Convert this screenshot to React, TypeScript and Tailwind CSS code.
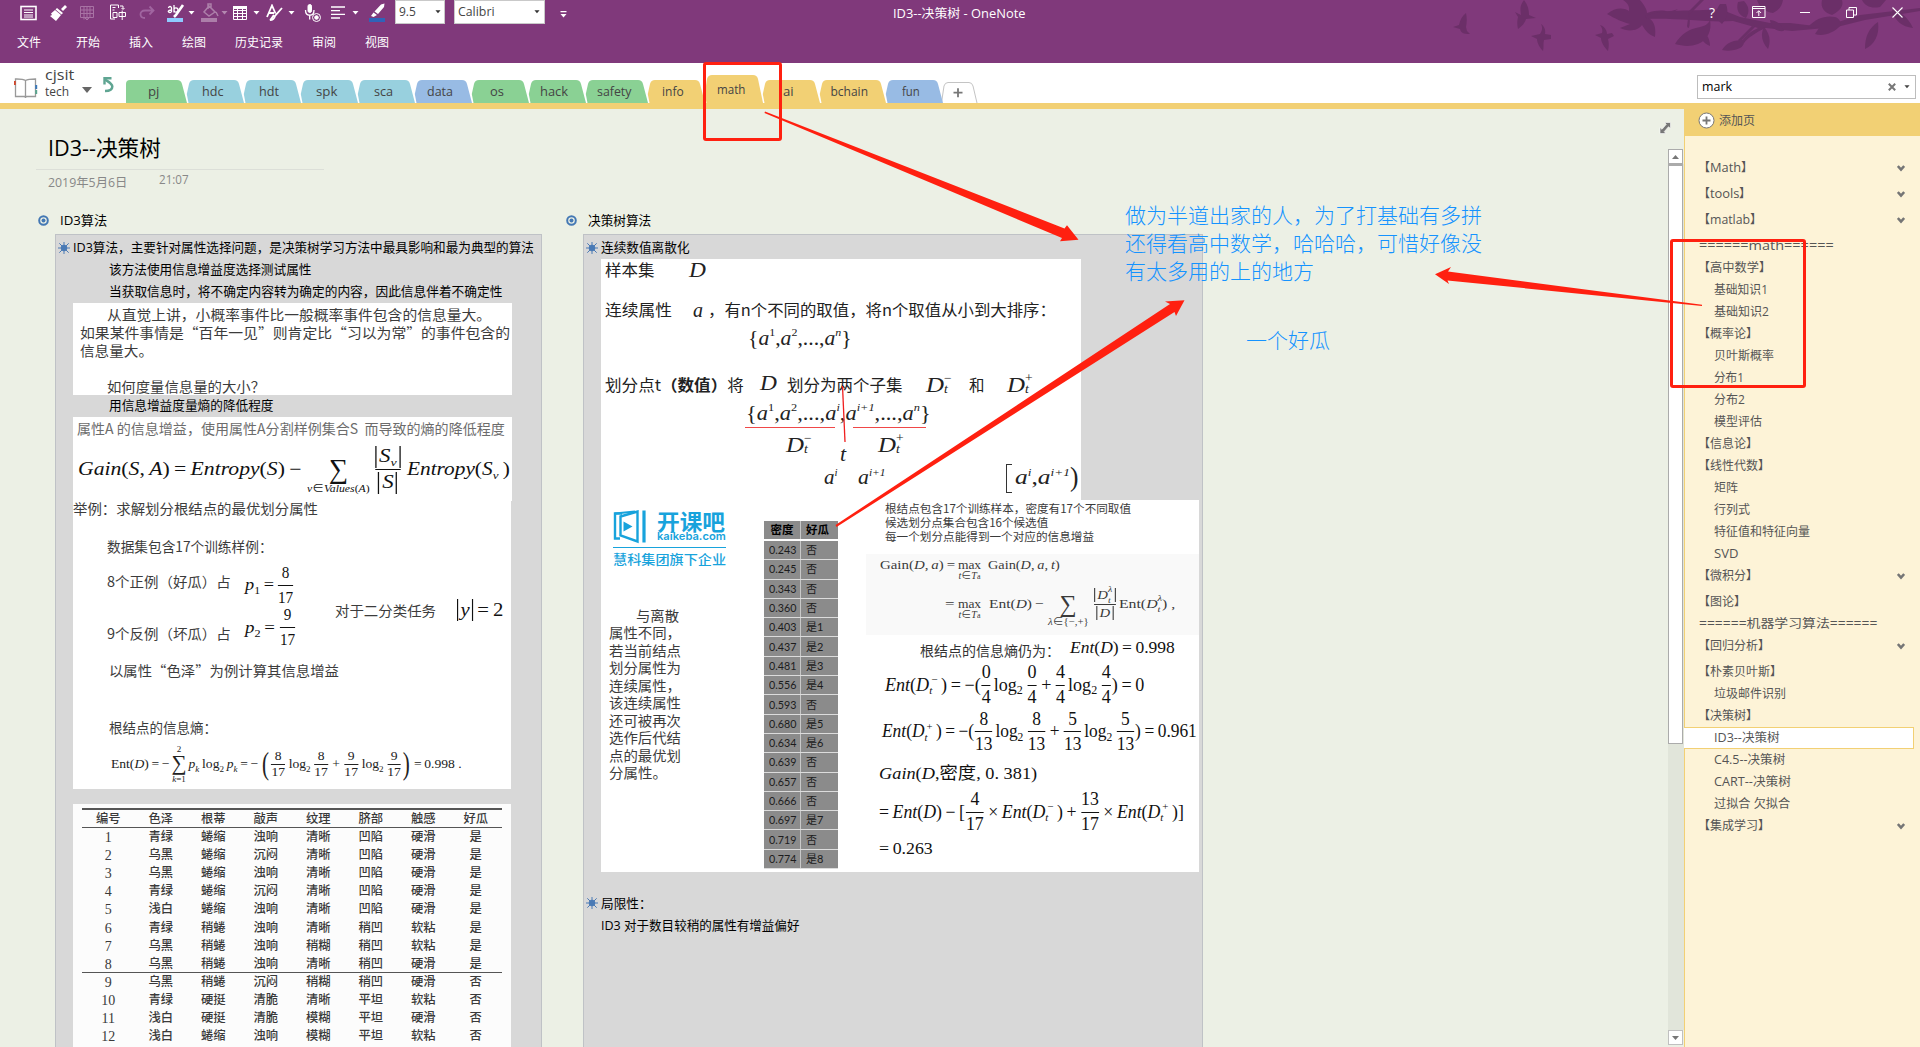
import React, { useLayoutEffect, useRef, useState } from "react";

const UI = "font-['Open_Sans','Noto_Sans_CJK_SC',sans-serif]";
const CJK = "font-['Noto_Sans_CJK_SC',sans-serif]";
const MATH = "font-['Liberation_Serif','Noto_Sans_CJK_SC',serif]";

type Kids = { children?: React.ReactNode };

/** Stretches its content horizontally so that it fills exactly `w` pixels. */
function Fit({ w, className = "", children }: Kids & { w: number; className?: string }) {
  const ref = useRef<HTMLSpanElement>(null);
  const [k, setK] = useState(1);
  useLayoutEffect(() => {
    if (ref.current && ref.current.offsetWidth) setK(w / ref.current.offsetWidth);
  }, [w]);
  return (
    <span className={"flex shrink-0 items-center " + className} style={{ width: w }}>
      <span ref={ref} className="inline-flex w-max shrink-0 origin-left items-center whitespace-pre" style={{ transform: `scaleX(${k})` }}>
        {children}
      </span>
    </span>
  );
}

function Frac({ n, d, h = "h-[24px]" }: { n: React.ReactNode; d: React.ReactNode; h?: string }) {
  return (
    <span className="inline-flex shrink-0 flex-col items-center px-[1px] not-italic">
      <span className={"flex items-center " + h}>{n}</span>
      <span className="h-px w-full bg-current" />
      <span className={"flex items-center " + h}>{d}</span>
    </span>
  );
}

/** Stacked superscript and subscript. */
function Sc({ up, dn, size = "text-[11px]" }: { up?: React.ReactNode; dn?: React.ReactNode; size?: string }) {
  return (
    <span className={"inline-flex flex-col leading-[10px] " + size}>
      <span className="h-[11px]">{up}</span>
      <span className="h-[11px]">{dn}</span>
    </span>
  );
}

const I = ({ children }: Kids) => <span className="italic">{children}</span>;
const Abs = ({ children, h = "h-[22px]" }: Kids & { h?: string }) => (
  <span className={"inline-flex items-center border-x border-current px-[2px] " + h}>{children}</span>
);

/* ---------- title bar ---------- */

const Caret = ({ className = "" }: { className?: string }) => (
  <svg width="7" height="4" viewBox="0 0 7 4" className={className}>
    <path d="M0.5 0h6L3.5 3.6z" fill="currentColor" />
  </svg>
);

function Decoration() {
  return (
    <svg className="absolute top-0 right-0" width="480" height="62" viewBox="1440 0 480 62" fill="#6b2f68">
      <path d="M1466 13c-4 3-6 7-7 12l-6 2 7 2c1 4 3 5 10 5l-3-3-1-4c1-5 1-9 0-14z" />
      <path d="M1524 0c-4 5-4 9-3 15l-6-3 3 5c-1 4-1 8 0 12 4-3 7-6 8-10l10-1-7-3c0-5-1-10-5-15z" />
      <path d="M1541 24c2 4 1 7-1 10l-9 2 6 3c0 4 3 9 6 12 1-4 0-7 1-11l7-1v-4l-6-1c1-4-1-8-4-10z" />
      <path d="M1600 25c2 3 3 5 2 8l-7 2 6 3c0 4 3 9 7 13 1-5 1-8 0-12l6-3-2-3-5 1c0-4-3-8-7-9z" />
      <path d="M1607 14c8-6 15-7 22-3 1-6-3-9-6-11h17c4 5 7 9 7 13 10-3 16-3 22-1l9-3-9 6c-8-1-13 0-20 3 6 4 7 11 6 19-6-2-10-7-13-12-4 6-14 7-22 3l10-4c-8-2-14-5-23-10z" />
      <path d="M1645 16c20-8 45-4 75-7l20 8 30 6h20l25 3 20-3 25-8 60-7v3l-55 9-28 7-45 4-26-3c-10 4-18 10-22 15l-2-2c5-7 10-10 16-13l-25-7c-25 2-50-3-86-2z" />
      <path d="M1700 0l-12 12 2 2 14-14zM1689 12c2 12 0 20-2 14z" />
      <path d="M1675 44c6-10 14-15 25-17 5-1 8-3 10-7 2 10-2 20-12 24-8 3-16 2-23 0zM1698 28c8 4 12 10 12 18-7-3-12-9-12-18z" />
      <path d="M1722 50c5-8 12-10 22-10 1 6-4 9-10 10-4 1-8 1-12 0zM1738 40l14-14 3 1-15 15z" />
      <path d="M1764 27c6 7 7 14 4 22-6-7-8-14-4-22zM1770 20c8 1 12 5 14 11-9 1-13-4-14-11zM1757 0c2 7 8 12 16 13 6-3 9-7 10-13z" />
      <path d="M1720 4c-6 8-5 14 2 20 5-6 7-12 4-20zM1738 2c-2 7 0 13 8 16 4-6 3-12-2-17z" />
      <path d="M1808 27c8-9 18-12 27-10 4 1 6 5 6 8-7 8-18 12-26 9l4-6zM1822 0c-2 8 3 13 10 15 8-4 12-9 10-15z" />
      <path d="M1878 22c-9 6-13 14-13 27 9-4 15-14 13-27zM1862 0c3 6 9 9 18 7l6-7zM1892 10c8 1 16 7 21 18-11-1-19-8-21-18z" />
    </svg>
  );
}

function TitleBar() {
  return (
    <header className={"relative h-[63px] shrink-0 bg-[#80397b] text-white " + UI}>
      <Decoration />
      <div className="relative flex h-[25px] items-start">
        <div className="flex h-[25px] w-[395px] shrink-0 items-center">
          <svg className="ml-[20px]" width="18" height="16" viewBox="0 0 18 16" fill="none" stroke="#fff">
            <rect x="1" y="1.5" width="15" height="13" strokeWidth="1.6" />
            <path d="M4 5h9M4 7.5h9M4 10h9M4 12h9" />
          </svg>
          <svg className="ml-[11px]" width="18" height="16" viewBox="0 0 18 16" fill="#fff">
            <path d="M12 4l4-4 2 2-4 4zM8 3l6 5-1.5 1.5L6.500 4.500zM6 5l6 5-5 6-6-5 2-1-1-1.500z" />
          </svg>
          <svg className="ml-[12px]" width="16" height="16" viewBox="0 0 16 16" fill="none" stroke="#a873a4">
            <path d="M1.500 1.500h13v11h-13zM1.500 5h13M1.500 8.500h13M5 1.500v13M8 1.500v7M11 1.500v11M8 8v7M5.500 12.500L8 15l2.500-2.500" />
          </svg>
          <svg className="ml-[14px]" width="18" height="17" viewBox="0 0 18 17" fill="none" stroke="#fff">
            <path d="M6 15H1.500V1h8v3M3.500 3.500h3M3.500 6h2M11 2h3v3M12.500 4l1.500 1.500L15.500 4M4 8.500h4v5H4zM10 8.500h6.500v4H10zM13.200 6.500v9.500" />
          </svg>
          <svg className="ml-[12px]" width="16" height="16" viewBox="0 0 16 16" fill="none" stroke="#a065a0" strokeWidth="1.800">
            <path d="M14 5.500H6C0 5.500 0 13 6 13M10.500 1.500l4 4-4 4" />
          </svg>
          <span className="ml-[12px] flex w-[18px] flex-col">
            <svg width="18" height="15" viewBox="0 0 18 15" fill="none" stroke="#fff">
              <path d="M1.500 5c0-2 3-2 3 0v4M4.500 7c-4 0-4 2.500-1.500 2.500L4.500 9M7 2v7.500M7 7c0-3 4-2.500 4 0s-4 3-4 0" strokeWidth="1.300" />
              <path d="M16 2L9 12l-2 2" strokeWidth="2.600" />
            </svg>
            <span className="h-[4px] w-[16px] bg-[#8ecbff]" />
          </span>
          <Caret className="ml-[3px]" />
          <span className="ml-[6px] flex w-[18px] flex-col opacity-35">
            <svg width="18" height="15" viewBox="0 0 18 15" fill="none" stroke="#fff" strokeWidth="1.500">
              <path d="M8 3l6 6-6 4-5-4zM7 6V1h3v4M15 9l2 4" />
            </svg>
            <span className="h-[4px] w-[16px] bg-white" />
          </span>
          <Caret className="ml-[2px] opacity-40" />
          <svg className="ml-[5px]" width="14" height="14" viewBox="0 0 14 14" fill="none" stroke="#fff">
            <path d="M0.500 1.500h13v12h-13zM0.500 4.500h13M0.500 7.500h13M0.500 10.500h13M4.500 1.500v12M9.500 1.500v12" />
            <path d="M0 1.500h14" strokeWidth="3" />
          </svg>
          <Caret className="ml-[6px]" />
          <svg className="ml-[6px]" width="17" height="18" viewBox="0 0 17 18" fill="none" stroke="#fff" strokeWidth="1.800">
            <path d="M1 13L6 1.500l3.500 8M3 9h5M16 4L9 12c-1 4-3 4-5 4 2-1 2-3 4-5" />
          </svg>
          <Caret className="ml-[5px]" />
          <svg className="ml-[9px]" width="18" height="18" viewBox="0 0 18 18" fill="none" stroke="#fff">
            <rect x="4" y="0.500" width="3.500" height="8" rx="1.700" fill="#fff" />
            <path d="M1.500 6c0 7 8.500 7 8.500 0M5.700 11.500v4" strokeWidth="1.300" />
            <circle cx="12.500" cy="13.500" r="4" />
            <circle cx="12.500" cy="13.500" r="1.800" fill="#fff" />
          </svg>
          <svg className="ml-[9px]" width="15" height="13" viewBox="0 0 15 13" stroke="#fff" strokeWidth="1.300">
            <path d="M0 1h14M0 4.700h9M0 8.400h14M0 12h9" />
          </svg>
          <Caret className="ml-[6px]" />
          <span className="ml-[10px] flex flex-col items-center">
            <svg width="16" height="15" viewBox="0 0 16 15" fill="#fff">
              <path d="M12 1.500l3.500-1L15 4 9 11 5.500 8.500zM4.500 9.500l3.500 2.500-3.500 2L2 13z" />
            </svg>
            <span className="h-[4px] w-[16px] bg-[#2f63b8]" />
          </span>
        </div>
        <div className="flex h-[24px] w-[50px] items-center justify-between border border-[#c9c9c9] bg-white pr-[3px] pl-[3px] text-[12px] text-[#444]">
          <Fit w={17}>9.5</Fit>
          <Caret className="w-[6px] text-[#333]" />
        </div>
        <div className="ml-[9px] flex h-[24px] w-[91px] items-center justify-between border border-[#c9c9c9] bg-white pr-[4px] pl-[3px] text-[12px] text-[#444]">
          <Fit w={37}>Calibri</Fit>
          <Caret className="w-[6px] text-[#333]" />
        </div>
        <svg className="mt-[11px] ml-[15px]" width="7" height="7" viewBox="0 0 7 7" fill="#fff">
          <path d="M0.500 0h6v1.200h-6zM0.500 3h6L3.500 6.500z" />
        </svg>
        <Fit w={132} className="mt-[5px] ml-[326px] text-[12px]">ID3--决策树 - OneNote</Fit>
        <div className="ml-auto flex h-[24px] w-[211px] items-center">
          <span className="w-[10px] text-[14px]">?</span>
          <svg className="ml-[33px]" width="14" height="12" viewBox="0 0 14 12" fill="none" stroke="#fff">
            <path d="M0.500 0.500h12.500v11H0.500zM0.500 2.500h12.500M6.800 10V5M4.500 7L6.800 4.700 9.100 7" />
          </svg>
          <span className="ml-[34px] h-px w-[10px] bg-white" />
          <svg className="ml-[36px]" width="11" height="11" viewBox="0 0 11 11" fill="none" stroke="#fff">
            <path d="M0.500 3h7v7.500h-7zM3 3V0.500h7.500v7.500H8" />
          </svg>
          <svg className="ml-[35px]" width="11" height="11" viewBox="0 0 11 11" stroke="#fff" strokeWidth="1.100">
            <path d="M0.500 0.500l10 10M10.500 0.500l-10 10" />
          </svg>
        </div>
      </div>
      <nav className="relative flex h-[36px] items-center pl-[17px] text-[12px]">
        <span className="w-[59px]">文件</span>
        <span className="w-[53px]">开始</span>
        <span className="w-[53px]">插入</span>
        <span className="w-[53px]">绘图</span>
        <span className="w-[77px]">历史记录</span>
        <span className="w-[53px]">审阅</span>
        <span>视图</span>
      </nav>
    </header>
  );
}

/* ---------- section tabs ---------- */

type Tab = { name: string; w: number; c: string; tw: number; on?: boolean };
const TABS: Tab[] = [
  { name: "pj", w: 60, c: "#8ad194", tw: 11 },
  { name: "hdc", w: 57, c: "#98d0de", tw: 21 },
  { name: "hdt", w: 57, c: "#98d0de", tw: 20 },
  { name: "spk", w: 57, c: "#98d0de", tw: 21 },
  { name: "sca", w: 57, c: "#98d0de", tw: 19 },
  { name: "data", w: 57, c: "#98bbe4", tw: 26 },
  { name: "os", w: 57, c: "#8ad194", tw: 14 },
  { name: "hack", w: 57, c: "#8ad194", tw: 28 },
  { name: "safety", w: 62, c: "#8ad194", tw: 34 },
  { name: "info", w: 57, c: "#f2d074", tw: 22 },
  { name: "math", w: 58, c: "#f2d074", tw: 28, on: true },
  { name: "ai", w: 57, c: "#f2d074", tw: 11 },
  { name: "bchain", w: 66, c: "#f2d074", tw: 38 },
  { name: "fun", w: 57, c: "#98bbe4", tw: 18 },
];

function SectionTab({ t, first }: { t: Tab; first: boolean }) {
  const h = t.on ? 28 : 23;
  const w = t.w;
  const left = first ? `M0 ${h}V4Q0 0 4 0` : `M2.500 ${h}L0.800 ${h - 9}L3 4Q4 0 8 0`;
  return (
    <div className={"relative flex items-center justify-center pr-[5px] text-[#444] " + (t.on ? "h-[28px]" : "h-[23px]")} style={{ width: w }}>
      <svg className="absolute top-0 left-0 overflow-visible" width={w} height={h}>
        <path d={`${left}H${w - 9}Q${w - 5} 0 ${w - 4} 4L${w + 1} ${h}Z`} fill={t.c} />
      </svg>
      <Fit w={t.tw} className="relative pt-[1px] text-[12px]">{t.name}</Fit>
    </div>
  );
}

function TabStrip() {
  return (
    <div className={"flex h-[40px] shrink-0 items-end bg-white " + UI}>
      <div className="flex h-[40px] w-[126px] items-start">
        <svg className="mt-[15px] ml-[14px]" width="24" height="20" viewBox="0 0 24 20" fill="none">
          <path d="M11.500 2.500C9 0.800 5 1 1.500 1v17.500h9l1 1 1-1h9V1c-4 0-7.500 0-10 1.500zV19" stroke="#999" strokeWidth="1.300" />
          <path d="M0.800 3v4" stroke="#d2472c" strokeWidth="2" />
          <path d="M22.200 7v4" stroke="#3b78b8" strokeWidth="2" />
          <path d="M22.200 12v4" stroke="#5aa58e" strokeWidth="2" />
        </svg>
        <div className="ml-[7px] w-[30px] pt-px text-[#444]">
          <Fit w={29} className="h-[21px] text-[15px]">cjsit</Fit>
          <Fit w={24} className="h-[15px] text-[12.500px]">tech</Fit>
        </div>
        <svg className="mt-[24px] ml-[7px]" width="10" height="6" viewBox="0 0 10 6"><path d="M0 0h10L5 6z" fill="#666" /></svg>
        <svg className="mt-[14px] ml-[11px]" width="11" height="16" viewBox="0 0 11 16" fill="none" stroke="#5fa592">
          <path d="M2 2.500c3 2 7.300 4 7.300 7C9.300 12.500 7 14 2 14" strokeWidth="2.500" />
          <path d="M1.500 7.500V1.200h7" strokeWidth="2.400" />
        </svg>
      </div>
      {TABS.map((t, i) => <SectionTab key={t.name} t={t} first={i === 0} />)}
      <svg className="-ml-[1px] overflow-visible" width="36" height="21" viewBox="0 0 36 21" fill="none">
        <path d="M0.500 21L1.500 14 3 4Q4 0.500 7 0.500H28Q31 0.500 32 4L36 21" stroke="#c4c4c4" />
        <path d="M12.500 10.700h9M17 6.200v9" stroke="#777" strokeWidth="1.800" />
      </svg>
      <div className="mr-[4px] mb-[4px] ml-auto flex h-[24px] w-[219px] items-center border border-[#bdbdbd] bg-white pl-[4px] text-[12px] text-black">
        <Fit w={30} className="pb-[1px]">mark</Fit>
        <svg className="ml-[156px]" width="8" height="8" viewBox="0 0 8 8"><path d="M0.800 0.800l6.400 6.400M7.200 0.800L0.800 7.200" stroke="#777" strokeWidth="2" /></svg>
        <Caret className="ml-[8px] w-[6px] text-[#444]" />
      </div>
    </div>
  );
}

/* ---------- notes canvas ---------- */

const Target = () => (
  <svg width="11" height="11" viewBox="0 0 11 11" fill="none">
    <circle cx="5.500" cy="5.500" r="4.300" stroke="#4478b4" strokeWidth="2" />
    <circle cx="5.500" cy="5.500" r="2" fill="#4478b4" />
  </svg>
);
const Star = () => (
  <svg className="shrink-0" width="12" height="12" viewBox="0 0 12 12">
    <path d="M6 0v12M0 6h12M1.300 1.300l9.400 9.400M10.700 1.300l-9.400 9.400" stroke="#4a7ab5" strokeWidth="1" />
    <circle cx="6" cy="6" r="3.200" fill="#4a7ab5" />
  </svg>
);

const MELONS: string[][] = [
  ["1", "青绿", "蜷缩", "浊响", "清晰", "凹陷", "硬滑", "是"],
  ["2", "乌黑", "蜷缩", "沉闷", "清晰", "凹陷", "硬滑", "是"],
  ["3", "乌黑", "蜷缩", "浊响", "清晰", "凹陷", "硬滑", "是"],
  ["4", "青绿", "蜷缩", "沉闷", "清晰", "凹陷", "硬滑", "是"],
  ["5", "浅白", "蜷缩", "浊响", "清晰", "凹陷", "硬滑", "是"],
  ["6", "青绿", "稍蜷", "浊响", "清晰", "稍凹", "软粘", "是"],
  ["7", "乌黑", "稍蜷", "浊响", "稍糊", "稍凹", "软粘", "是"],
  ["8", "乌黑", "稍蜷", "浊响", "清晰", "稍凹", "硬滑", "是"],
  ["9", "乌黑", "稍蜷", "沉闷", "稍糊", "稍凹", "硬滑", "否"],
  ["10", "青绿", "硬挺", "清脆", "清晰", "平坦", "软粘", "否"],
  ["11", "浅白", "硬挺", "清脆", "模糊", "平坦", "硬滑", "否"],
  ["12", "浅白", "蜷缩", "浊响", "模糊", "平坦", "软粘", "否"],
];

function MelonTable() {
  return (
    <div className={"mt-[15px] ml-[17px] h-[260px] w-[438px] bg-[#fcfcfc] px-[9px] pt-[4px] text-[12.300px] font-medium text-[#3a3a3a] " + MATH}>
      <div className="grid h-[20px] grid-cols-8 items-center border-t-2 border-b border-[#555] text-center leading-[18px]">
        {["编号", "色泽", "根蒂", "敲声", "纹理", "脐部", "触感", "好瓜"].map((h) => <span key={h}>{h}</span>)}
      </div>
      {MELONS.map((r, i) => (
        <div key={i} className={"grid h-[18.100px] grid-cols-8 items-center pt-px text-center leading-[17px] " + (i === 7 ? "border-b border-[#555]" : "")}>
          {r.map((c, j) => <span key={j} className={j === 0 ? "text-[14px]" : ""}>{c}</span>)}
        </div>
      ))}
    </div>
  );
}

const Log = () => (
  <span className="flex items-center pl-[2px]">log<Sc dn="2" size="text-[12px]" />&thinsp;</span>
);
const EntD = ({ s }: { s: string }) => (
  <span className="flex items-center"><I>Ent</I>(<I>D</I><Sc up={<span className="pl-[2px]">{s}</span>} dn={<I>t</I>} />&thinsp;)</span>
);

function LeftNote() {
  return (
    <section className="w-[529px] shrink-0">
      <h2 className="flex h-[28px] items-center pl-[2px] text-[12.670px] text-black">
        <Target />
        <Fit w={47} className="ml-[11px]">ID3算法</Fit>
      </h2>
      <div className="ml-[19px] h-[830px] w-[487px] border border-[#bfc2c6] bg-[#d8d8d8] pt-[2px] text-[12.670px] text-black">
        <div className="flex h-[21px] items-center pl-[2px]">
          <Star />
          <Fit w={461} className="ml-[3px]">ID3算法，主要针对属性选择问题，是决策树学习方法中最具影响和最为典型的算法</Fit>
        </div>
        <div className="flex h-[22px] items-center pl-[53px]"><Fit w={203}>该方法使用信息增益度选择测试属性</Fit></div>
        <div className="flex h-[23px] items-center pl-[53px]"><Fit w={393}>当获取信息时，将不确定内容转为确定的内容，因此信息伴着不确定性</Fit></div>

        <div className={"ml-[17px] h-[92px] w-[439px] bg-white pt-[2px] text-[14px] leading-[18px] text-[#3c3c3c] " + CJK}>
          <Fit w={384} className="ml-[34px] h-[18px]">从直觉上讲，小概率事件比一般概率事件包含的信息量大。</Fit>
          <Fit w={430} className="ml-[7px] h-[18px]">如果某件事情是“百年一见”则肯定比“习以为常”的事件包含的</Fit>
          <Fit w={73} className="ml-[7px] h-[18px]">信息量大。</Fit>
          <Fit w={158} className="mt-[18px] ml-[34px] h-[17px]">如何度量信息量的大小？</Fit>
        </div>
        <div className="flex h-[22px] items-center pb-[2px] pl-[53px]"><Fit w={165}>用信息增益度量熵的降低程度</Fit></div>

        <div className="ml-[17px] h-[84px] w-[439px] bg-white">
          <Fit w={428} className={"ml-[4px] h-[23px] text-[14px] text-[#6c6c6c] " + CJK}>属性A 的信息增益，使用属性A分割样例集合S  而导致的熵的降低程度</Fit>
          <div className={"flex h-[60px] items-center pb-[1px] pl-[5px] text-[18px] text-[#111] " + MATH}>
            <Fit w={224}><I>Gain</I>(<I>S</I>,&thinsp;<I>A</I>)&thinsp;=&thinsp;<I>Entropy</I>(<I>S</I>)&thinsp;−</Fit>
            <span className="ml-[5px] flex w-[63px] flex-col items-center">
              <span className="h-[12px]" />
              <span className="flex h-[26px] items-center text-[27px]">∑</span>
              <Fit w={63} className="h-[12px] text-[11px]"><I>v</I>∈<I>Values</I>(<I>A</I>)</Fit>
            </span>
            <Fit w={28} className="ml-[4px]">
              <Frac h="h-[25px]" n={<Abs><I>S</I><Sc dn={<I>v</I>} size="text-[11px]" /></Abs>} d={<Abs><I>S</I></Abs>} />
            </Fit>
            <Fit w={103} className="ml-[5px]"><I>Entropy</I>(<I>S</I><Sc dn={<I>v</I>} size="text-[11px]" />&thinsp;)</Fit>
          </div>
        </div>

        <div className={"ml-[17px] h-[288px] w-[438px] bg-white text-[14px] text-[#3c3c3c] " + CJK}>
          <Fit w={245} className="h-[14px]">举例：求解划分根结点的最优划分属性</Fit>
          <Fit w={166} className="mt-[22px] ml-[34px] h-[19px]">数据集包含17个训练样例：</Fit>
          <div className="mt-[3px] flex h-[86px]">
            <div className="w-[262px]">
              <div className="flex h-[52px] items-center pl-[34px]">
                <Fit w={124} className="mb-[7px]">8个正例（好瓜）占</Fit>
                <span className={"ml-[14px] flex items-center text-[17px] text-[#111] " + MATH}>
                  <Fit w={29}><I>p</I><Sc dn="1" />&thinsp;=</Fit>
                  <Fit w={17} className="ml-[3px]"><Frac n="8" d="17" /></Fit>
                </span>
              </div>
              <div className="flex h-[33px] items-center pl-[34px]">
                <Fit w={124} className="mt-[12px]">9个反例（坏瓜）占</Fit>
                <span className={"ml-[14px] flex items-center text-[17px] text-[#111] " + MATH}>
                  <Fit w={30}><I>p</I><Sc dn="2" />&thinsp;=</Fit>
                  <Fit w={17} className="ml-[4px]"><Frac n="9" d="17" /></Fit>
                </span>
              </div>
            </div>
            <div className="flex items-center pt-[16px]">
              <Fit w={101}>对于二分类任务</Fit>
              <Fit w={46} className={"ml-[21px] text-[18px] text-[#111] " + MATH}><Abs><I>y</I></Abs>&thinsp;=&thinsp;2</Fit>
            </div>
          </div>
          <Fit w={230} className="mt-[16px] ml-[36px] h-[19px]">以属性“色泽”为例计算其信息增益</Fit>
          <Fit w={108} className="mt-[38px] ml-[36px] h-[18px]">根结点的信息熵：</Fit>
          <Fit w={351} className={"mt-[3px] ml-[38px] h-[50px] text-[13.500px] text-[#222] " + MATH}>
            Ent(<I>D</I>)&thinsp;=&thinsp;−
            <span className="flex flex-col items-center px-[2px] text-[9px]">
              <span className="h-[10px] leading-[10px]">2</span>
              <span className="flex h-[20px] items-center text-[21px]">∑</span>
              <span className="h-[10px] leading-[10px]"><I>k</I>=1</span>
            </span>
            <I>p</I><Sc dn={<I>k</I>} size="text-[9px]" />&thinsp;log<Sc dn="2" size="text-[9px]" />&thinsp;<I>p</I><Sc dn={<I>k</I>} size="text-[9px]" />&thinsp;=&thinsp;−&thinsp;
            <span className="scale-x-75 scale-y-[1.150] text-[28px] leading-none">(</span>
            <Frac h="h-[15px]" n="8" d="17" />&thinsp;log<Sc dn="2" size="text-[9px]" />&thinsp;<Frac h="h-[15px]" n="8" d="17" /> + <Frac h="h-[15px]" n="9" d="17" />&thinsp;log<Sc dn="2" size="text-[9px]" />&thinsp;<Frac h="h-[15px]" n="9" d="17" />
            <span className="scale-x-75 scale-y-[1.150] text-[28px] leading-none">)</span>&thinsp;=&thinsp;0.998 .
          </Fit>
        </div>
        <MelonTable />
      </div>
    </section>
  );
}

const DENSITY: [string, string][] = [
  ["0.243", "否"], ["0.245", "否"], ["0.343", "否"], ["0.360", "否"], ["0.403", "是1"], ["0.437", "是2"],
  ["0.481", "是3"], ["0.556", "是4"], ["0.593", "否"], ["0.680", "是5"], ["0.634", "是6"], ["0.639", "否"],
  ["0.657", "否"], ["0.666", "否"], ["0.697", "是7"], ["0.719", "否"], ["0.774", "是8"],
];

function DensityTable() {
  return (
    <div className="mt-[21px] w-[74px] text-[11.500px] text-[#1c1c1c] font-['Lato','Noto_Sans_CJK_SC',sans-serif]">
      <div className="mb-[2px] flex h-[18px] gap-px bg-[#c8c8c8] font-bold text-black">
        <span className="flex w-[36px] items-center justify-center bg-[#8b8b8b]">密度</span>
        <span className="flex flex-1 items-center bg-[#8b8b8b] pl-[5px]">好瓜</span>
      </div>
      {DENSITY.map(([d, g]) => (
        <div key={d} className="flex h-[19.300px] gap-px border-b border-[#dcdcdc] bg-[#c8c8c8] leading-[17px]">
          <span className="flex w-[36px] items-center bg-[#8b8b8b] pb-px pl-[5px]"><Fit w={27}>{d}</Fit></span>
          <span className="flex flex-1 items-center bg-[#8b8b8b] pb-px pl-[5px] text-[11px]">{g}</span>
        </div>
      ))}
    </div>
  );
}

function Kaikeba() {
  return (
    <div className={"flex h-[71px] flex-col pt-[10px] pl-[12px] text-[#18a3dc] " + CJK}>
      <div className="flex h-[37px] shrink-0">
        <svg width="34" height="34" viewBox="0 0 34 34" fill="none" stroke="#18a3dc">
          <path d="M7 28.500H2V3.500H9M7.500 25.500V6.500L24.500 1.500V31.500z" strokeWidth="2.400" />
          <path d="M2 3.500L22 1.500" strokeWidth="2" />
          <path d="M31 0.500v32" strokeWidth="3.200" />
          <path d="M10.500 11.500v10l9-5z" fill="#18a3dc" stroke="none" />
        </svg>
        <div className="ml-[10px] w-[70px]">
          <Fit w={68} className="h-[20px] text-[22px] font-bold">开课吧</Fit>
          <Fit w={69} className="h-[13px] text-[11px] font-semibold font-['Inter',sans-serif]">kaikeba.com</Fit>
        </div>
      </div>
      <span className="h-px w-[113px] shrink-0 bg-[#18a3dc]" />
      <Fit w={113} className="h-[21px] text-[13px] font-medium">慧科集团旗下企业</Fit>
    </div>
  );
}

const A = ({ e }: { e: string }) => (
  <span className="flex items-center"><I>a</I><Sc up={e === "1" || e === "2" ? e : <I>{e}</I>} /></span>
);
const Dt = ({ s }: { s: string }) => (
  <span className="flex items-center"><I>D</I><Sc up={s} dn={<I>t</I>} size="text-[12px]" /></span>
);

const Max = () => (
  <span className="mx-[2px] flex w-[25px] flex-col items-center">
    <span className="h-[9px]" />
    <span className="flex h-[12px] items-center">max</span>
    <span className="flex h-[9px] items-end text-[10px] leading-[9px]"><I>t</I>∈<I>T</I><span className="text-[8px] leading-[6px]">a</span></span>
  </span>
);

function RightNote() {
  return (
    <section className="w-[640px] shrink-0">
      <h2 className="flex h-[28px] items-center pl-px text-[12.670px] text-black">
        <Target />
        <Fit w={63} className="ml-[11px]">决策树算法</Fit>
      </h2>
      <div className="ml-[18px] h-[830px] w-[620px] border border-[#bfc2c6] bg-[#d8d8d8] pt-[2px] text-[12.670px] text-black">
        <div className="flex h-[22px] items-center pb-px pl-[2px]">
          <Star />
          <Fit w={89} className="ml-[3px]">连续数值离散化</Fit>
        </div>

        <div className={"relative ml-[17px] h-[241px] w-[480px] bg-white text-[15.500px] text-[#222] " + CJK}>
          <div className="flex h-[22px] items-center pl-[4px]">
            <Fit w={50}>样本集</Fit>
            <Fit w={17} className={"mb-[2px] ml-[34px] text-[22px] italic " + MATH}>D</Fit>
          </div>
          <div className="mt-[17px] flex h-[24px] items-center pl-[4px]">
            <Fit w={67}>连续属性</Fit>
            <Fit w={10} className={"ml-[21px] text-[20px] italic " + MATH}>a</Fit>
            <Fit w={348} className="ml-[5px]">，有n个不同的取值，将n个取值从小到大排序：</Fit>
          </div>
          <div className={"mt-px flex h-[30px] items-center pl-[147px] text-[20px] " + MATH}>
            <Fit w={104}>{"{"}<A e="1" />,<A e="2" />,...,<A e="n" />{"}"}</Fit>
          </div>
          <div className="mt-[19px] flex h-[26px] items-center pl-[4px]">
            <Fit w={139}>划分点t<b>（数值）</b>将</Fit>
            <Fit w={17} className={"mb-[6px] ml-[16px] text-[22px] italic " + MATH}>D</Fit>
            <Fit w={116} className="ml-[10px]">划分为两个子集</Fit>
            <Fit w={26} className={"mb-[2px] ml-[23px] text-[22px] " + MATH}><Dt s="−" /></Fit>
            <span className="ml-[17px] w-[16px]">和</span>
            <Fit w={26} className={"mb-[2px] ml-[22px] text-[22px] " + MATH}><Dt s="+" /></Fit>
          </div>
          <div className={"flex h-[29px] items-center pl-[145px] text-[20px] " + MATH}>
            <Fit w={185}>{"{"}<A e="1" />,<A e="2" />,...,<A e="i" />,<A e="i+1" />,...,<A e="n" />{"}"}</Fit>
          </div>
          <div className="flex h-px gap-[18px] pl-[144px]">
            <span className="w-[90px] bg-[#f04848]" />
            <span className="w-[73px] bg-[#f04848]" />
          </div>
          <div className={"mt-[2px] flex h-[28px] items-center pl-[185px] text-[22px] " + MATH}>
            <Fit w={26}><Dt s="−" /></Fit>
            <span className="mt-[18px] ml-[28px] w-[8px] italic">t</span>
            <Fit w={26} className="ml-[30px]"><Dt s="+" /></Fit>
          </div>
          <div className={"mt-[4px] flex h-[32px] items-center pl-[223px] text-[21px] " + MATH}>
            <Fit w={14}><A e="i" /></Fit>
            <Fit w={27} className="ml-[20px]"><A e="i+1" /></Fit>
            <span className="ml-[121px] h-[29px] w-[6px] border-y border-l border-[#333]" />
            <Fit w={63} className="ml-[3px]"><A e="i" />,<A e="i+1" /><span className="scale-y-125">)</span></Fit>
          </div>
          <svg className="absolute top-[127px] left-[240px]" width="6" height="57" viewBox="0 0 6 57">
            <path d="M1.500 0L4 56" stroke="#f01e1e" strokeWidth="1.300" />
          </svg>
        </div>

        <div className="ml-[17px] flex h-[372px] w-[598px] bg-white">
          <div className="w-[163px]">
            <Kaikeba />
            <div className={"mt-[36px] pl-[8px] text-[14px] leading-[17.600px] text-[#3c3c3c] " + CJK}>
              <Fit w={43} className="ml-[27px] h-[17.500px]">与离散</Fit>
              {["属性不同，", "若当前结点", "划分属性为", "连续属性，", "该连续属性", "还可被再次", "选作后代结", "点的最优划"].map((l) => (
                <Fit key={l} w={72} className="h-[17.500px]">{l}</Fit>
              ))}
              <Fit w={58} className="h-[17.500px]">分属性。</Fit>
            </div>
          </div>
          <DensityTable />
          <div className={"ml-[28px] w-[333px] pt-[2px] text-[#111] " + MATH}>
            <div className={"pl-[19px] text-[11.500px] text-[#3a3a3a] " + CJK}>
              <Fit w={246} className="h-[14px]">根结点包含17个训练样本，密度有17个不同取值</Fit>
              <Fit w={163} className="h-[14px]">候选划分点集合包含16个候选值</Fit>
              <Fit w={209} className="h-[14px]">每一个划分点能得到一个对应的信息增益</Fit>
            </div>
            <div className="mt-[10px] h-[81px] bg-[#f9f9f9] text-[13.500px] text-[#3a3a3a]">
              <div className="flex h-[22px] items-center pl-[14px]">
                <Fit w={75}>Gain(<I>D</I>,&thinsp;<I>a</I>)&thinsp;=</Fit>
                <Max />
                <Fit w={72} className="ml-[4px]">Gain(<I>D</I>,&thinsp;<I>a</I>,&thinsp;<I>t</I>)</Fit>
              </div>
              <div className="flex h-[56px] items-center pl-[79px]">
                <Fit w={10}>=</Fit>
                <Max />
                <Fit w={55} className="ml-[5px]">Ent(<I>D</I>)&thinsp;−</Fit>
                <span className="ml-[3px] flex w-[42px] flex-col items-center">
                  <span className="h-[12px]" />
                  <span className="flex h-[23px] items-center text-[24px]">∑</span>
                  <Fit w={41} className="h-[12px] text-[10px]"><I>λ</I>∈{"{−,+}"}</Fit>
                </span>
                <Fit w={24} className="ml-[4px]">
                  <Frac h="h-[17px]" n={<Abs h="h-[14px]"><I>D</I><Sc up={<I>λ</I>} dn={<I>t</I>} size="text-[9px]" /></Abs>} d={<Abs h="h-[14px]"><I>D</I></Abs>} />
                </Fit>
                <Fit w={56} className="ml-[2px]">Ent(<I>D</I><Sc up={<I>λ</I>} dn={<I>t</I>} size="text-[9px]" />) ,</Fit>
              </div>
            </div>
            <div className="flex h-[28px] items-center pl-[54px]">
              <Fit w={140} className={"mt-[3px] text-[14px] text-[#333] " + CJK}>根结点的信息熵仍为：</Fit>
              <Fit w={105} className="mb-[3px] ml-[10px] text-[17.500px]"><I>Ent</I>(<I>D</I>)&thinsp;=&thinsp;0.998</Fit>
            </div>
            <Fit w={259} className="ml-[19px] h-[44px] text-[18px]">
              <EntD s="−" />{"\u2009=\u2009−("}<Frac n="0" d="4" /><Log /><Frac n="0" d="4" />{"\u2009+\u2009"}<Frac n="4" d="4" /><Log /><Frac n="4" d="4" />{")\u2009=\u20090"}
            </Fit>
            <Fit w={315} className="mt-[2px] ml-[16px] h-[45px] text-[18px]">
              <EntD s="+" />{"\u2009=\u2009−("}<Frac n="8" d="13" /><Log /><Frac n="8" d="13" />{"\u2009+\u2009"}<Frac n="5" d="13" /><Log /><Frac n="5" d="13" />{")\u2009=\u20090.961"}
            </Fit>
            <Fit w={158} className="mt-[6px] ml-[13px] h-[26px] text-[17.500px]"><I>Gain</I>(<I>D</I>,密度, 0. 381)</Fit>
            <Fit w={305} className="mt-[4px] ml-[13px] h-[44px] text-[18px]">
              {"=\u2009"}<I>Ent</I>(<I>D</I>){"\u2009−\u2009["}<Frac n="4" d="17" />{"\u2009×\u2009"}<EntD s="−" />{"\u2009+\u2009"}<Frac n="13" d="17" />{"\u2009×\u2009"}<EntD s="+" />]
            </Fit>
            <Fit w={54} className="mt-[2px] ml-[13px] h-[24px] text-[17.500px]">=&thinsp;0.263</Fit>
          </div>
        </div>

        <div className="mt-[20px] flex h-[22px] items-center pl-[2px]">
          <Star />
          <span className="ml-[3px]">局限性：</span>
        </div>
        <div className="flex h-[22px] items-center pl-[17px]"><Fit w={198}>ID3 对于数目较稍的属性有增益偏好</Fit></div>
      </div>
    </section>
  );
}

/* ---------- page list ---------- */

type Page = { t: string; k?: "g" | "s" | "r"; w?: number; more?: boolean; on?: boolean };
const PAGES: Page[] = [
  { t: "Math", k: "g", w: 31, more: true },
  { t: "tools", k: "g", w: 29, more: true },
  { t: "matlab", k: "g", w: 40, more: true },
  { t: "======math======", k: "r", w: 135 },
  { t: "高中数学", k: "g", w: 49 },
  { t: "基础知识1", w: 54 },
  { t: "基础知识2", w: 55 },
  { t: "概率论", k: "g", w: 36 },
  { t: "贝叶斯概率", w: 60 },
  { t: "分布1", w: 30 },
  { t: "分布2", w: 31 },
  { t: "模型评估", w: 48 },
  { t: "信息论", k: "g", w: 36 },
  { t: "线性代数", k: "g", w: 48 },
  { t: "矩阵", w: 24 },
  { t: "行列式", w: 36 },
  { t: "特征值和特征向量", w: 96 },
  { t: "SVD", w: 24 },
  { t: "微积分", k: "g", w: 36, more: true },
  { t: "图论", k: "g", w: 24 },
  { t: "======机器学习算法======", k: "r", w: 178 },
  { t: "回归分析", k: "g", w: 48, more: true },
  { t: "朴素贝叶斯", k: "g", w: 60 },
  { t: "垃圾邮件识别", w: 72 },
  { t: "决策树", k: "g", w: 36 },
  { t: "ID3--决策树", w: 66, on: true },
  { t: "C4.5--决策树", w: 71 },
  { t: "CART--决策树", w: 77 },
  { t: "过拟合 欠拟合", w: 76 },
  { t: "集成学习", k: "g", w: 48, more: true },
];

function PageRow({ p }: { p: Page }) {
  const box = p.on
    ? "relative z-10 -ml-px mr-[6px] h-[22px] border-y border-r border-[#f2d074] bg-white pl-[30px] "
    : p.k === "g" ? "h-[22px] pl-[13px] " : p.k === "r" ? "h-[22px] pl-[14px] " : "h-[22px] pl-[29px] ";
  return (
    <div className={"flex items-center pr-[15px] " + box + (p.more ? "mb-[4px]" : "")}>
      {p.k === "g" && <span className="w-[12px]">【</span>}
      <Fit w={p.w ?? 40}>{p.t}</Fit>
      {p.k === "g" && <span className="w-[12px]">】</span>}
      {p.more && (
        <svg className="ml-auto" width="8" height="7" viewBox="0 0 8 7">
          <path d="M0.800 1l3.200 3.600L7.200 1" fill="none" stroke="#757575" strokeWidth="2.600" />
        </svg>
      )}
    </div>
  );
}

function Sidebar() {
  return (
    <aside className={"w-[236px] shrink-0 border-l border-[#f2d074] bg-[#fdf3d7] text-[12px] text-[#555] " + UI}>
      <div className="flex h-[27px] items-center bg-[#f2d074] pb-[4px] pl-[13px]">
        <svg width="17" height="17" viewBox="0 0 17 17">
          <circle cx="8.500" cy="8.500" r="7.500" fill="#fff" stroke="#777" />
          <path d="M4.500 8.500h8M8.500 4.500v8" stroke="#777" strokeWidth="1.800" />
        </svg>
        <span className="ml-[4px]">添加页</span>
      </div>
      <div className="pt-[21px]">
        {PAGES.map((p) => <PageRow key={p.t} p={p} />)}
      </div>
    </aside>
  );
}

function ScrollBar() {
  return (
    <div className="flex w-[16px] shrink-0 flex-col pt-[10px]">
      <svg className="mb-[14px] -ml-[10px]" width="15" height="16" viewBox="0 0 15 16">
        <path d="M2 14.500h6l-1.800-1.800 4.300-5L12.500 9.500V3.500h-6L8.300 5.300l-4.300 5L2 8.500z" fill="#777" stroke="#fff" strokeWidth="0.600" />
      </svg>
      <div className="flex h-[15px] w-[15px] items-center justify-center border border-[#ababab] bg-white">
        <svg width="7" height="4" viewBox="0 0 7 4"><path d="M0 4h7L3.500 0z" fill="#777" /></svg>
      </div>
      <div className="flex flex-1 flex-col bg-[#e1e5da]">
        <div className="h-[580px] w-[15px] border border-t-2 border-[#ababab] bg-white" />
      </div>
      <div className="mb-[2px] flex h-[15px] w-[15px] items-center justify-center border border-[#c0c0c0] bg-white">
        <svg width="7" height="4" viewBox="0 0 7 4"><path d="M0 0h7L3.500 4z" fill="#777" /></svg>
      </div>
    </div>
  );
}

/* ---------- mark-up drawn over the window ---------- */

function Annotations() {
  return (
    <>
      <svg className="pointer-events-none absolute top-0 left-0 z-20" width="1920" height="1047" viewBox="0 0 1920 1047">
        <g fill="none" stroke="#ff2010" strokeWidth="3">
          <rect x="704.500" y="63.500" width="76" height="76" rx="1.500" />
          <rect x="1671.500" y="240.500" width="133" height="146" rx="1.500" />
        </g>
        <g fill="#ff2010">
          <path d="M765 111.500L1064.500 228.500 1067 225.300 1078.500 239.800 1060 241.300 1062 238 764.500 113z" />
          <path d="M835.500 525L1170 304 1165 301.500 1184.500 300.300 1176 316 1174.500 312 836.500 527z" />
          <path d="M1702 304.800L1448 271.500 1451 267 1435 274.300 1449 284 1447.500 280.500 1702 306z" />
        </g>
      </svg>
      <div className={"absolute top-[200px] left-[1125px] z-20 text-[21px] leading-[28px] font-light text-[#1593ff] " + CJK}>
        <Fit w={357} className="h-[28px]">做为半道出家的人，为了打基础有多拼</Fit>
        <Fit w={357} className="h-[28px]">还得看高中数学，哈哈哈，可惜好像没</Fit>
        <Fit w={189} className="h-[28px]">有太多用的上的地方</Fit>
        <Fit w={84} className="mt-[41px] ml-[121px] h-[28px]">一个好瓜</Fit>
      </div>
    </>
  );
}

export default function App() {
  return (
    <div lang="zh-CN" className={"relative flex h-[1047px] w-[1920px] flex-col overflow-hidden bg-white " + UI}>
      <TitleBar />
      <TabStrip />
      <div className="h-[6px] shrink-0 bg-[#f2d074]" />
      <div className="flex min-h-0 flex-1 bg-[#ecf0e5]">
        <main className="w-[1668px] shrink-0 overflow-hidden pt-[19px] pl-[36px]">
          <h1 className="flex h-[42px] w-[288px] items-center border-b border-[#dcdfd8] pb-[2px] pl-[12px] text-[22px] text-black">
            <Fit w={113}>ID3--决策树</Fit>
          </h1>
          <div className="flex h-[26px] items-center pl-[12px] text-[12.500px] text-[#888]">
            <Fit w={79} className="pt-px">2019年5月6日</Fit>
            <Fit w={30} className="mb-[6px] ml-[32px] text-[12px]">21:07</Fit>
          </div>
          <div className="mt-[10px] flex">
            <LeftNote />
            <RightNote />
          </div>
        </main>
        <ScrollBar />
        <Sidebar />
      </div>
      <Annotations />
    </div>
  );
}
